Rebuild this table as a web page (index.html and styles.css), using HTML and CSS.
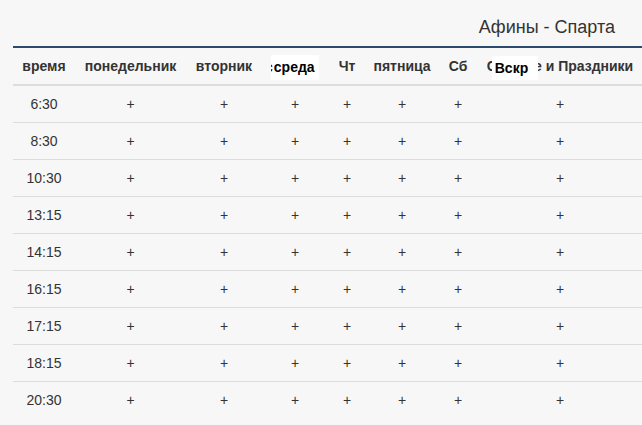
FILE: index.html
```html
<!DOCTYPE html>
<html lang="ru">
<head>
<meta charset="utf-8">
<title>Афины - Спарта</title>
<link rel="stylesheet" href="styles.css">
</head>
<body>
<div class="wrap">
  <div class="route-title">Афины - Спарта</div>
  <table class="schedule">
    <colgroup>
      <col class="c-time"><col class="c-mon"><col class="c-tue"><col class="c-wed">
      <col class="c-thu"><col class="c-fri"><col class="c-sat"><col class="c-sun">
    </colgroup>
    <thead>
      <tr>
        <th>время</th>
        <th>понедельник</th>
        <th>вторник</th>
        <th><span class="patch patch-wed">среда</span></th>
        <th>Чт</th>
        <th>пятница</th>
        <th>Сб</th>
        <th><span class="frag frag-c"></span><span class="patch patch-sun">Вскр</span><span class="frag frag-e"></span> и Праздники</th>
      </tr>
    </thead>
    <tbody>
      <tr><td>6:30</td><td>+</td><td>+</td><td>+</td><td>+</td><td>+</td><td>+</td><td>+</td></tr>
      <tr><td>8:30</td><td>+</td><td>+</td><td>+</td><td>+</td><td>+</td><td>+</td><td>+</td></tr>
      <tr><td>10:30</td><td>+</td><td>+</td><td>+</td><td>+</td><td>+</td><td>+</td><td>+</td></tr>
      <tr><td>13:15</td><td>+</td><td>+</td><td>+</td><td>+</td><td>+</td><td>+</td><td>+</td></tr>
      <tr><td>14:15</td><td>+</td><td>+</td><td>+</td><td>+</td><td>+</td><td>+</td><td>+</td></tr>
      <tr><td>16:15</td><td>+</td><td>+</td><td>+</td><td>+</td><td>+</td><td>+</td><td>+</td></tr>
      <tr><td>17:15</td><td>+</td><td>+</td><td>+</td><td>+</td><td>+</td><td>+</td><td>+</td></tr>
      <tr><td>18:15</td><td>+</td><td>+</td><td>+</td><td>+</td><td>+</td><td>+</td><td>+</td></tr>
      <tr><td>20:30</td><td>+</td><td>+</td><td>+</td><td>+</td><td>+</td><td>+</td><td>+</td></tr>
    </tbody>
  </table>
</div>
</body>
</html>
```
FILE: styles.css
```css
html, body {
  margin: 0;
  padding: 0;
  background: #f7f7f7;
}
body {
  font-family: "Liberation Sans", Arial, sans-serif;
  font-size: 14px;
  line-height: 20px;
  color: #333;
  overflow: hidden;
}
.wrap {
  padding-left: 13px;
}
.route-title {
  font-size: 18px;
  line-height: 20px;
  color: #333;
  text-align: right;
  padding: 17px 27px 9px 0;
  border-bottom: 2px solid #2b4a6c;
}
.schedule {
  width: 629px;
  table-layout: fixed;
  border-collapse: collapse;
  border-spacing: 0;
}
.c-time { width: 62px; }
.c-mon { width: 111px; }
.c-tue { width: 76px; }
.c-wed { width: 66px; }
.c-thu { width: 38px; }
.c-fri { width: 72px; }
.c-sat { width: 40px; }
.c-sun { width: 164px; }
.schedule th,
.schedule td {
  padding: 8px 0;
  text-align: center;
  white-space: nowrap;
  vertical-align: middle;
}
.schedule th {
  font-weight: bold;
  color: #333;
  border-bottom: 2px solid #dddddd;
}
.schedule td {
  border-top: 1px solid #dddddd;
  color: #333;
}
.schedule tbody tr:first-child td {
  border-top: 0;
}
.patch {
  display: inline-block;
  vertical-align: top;
  background: #ffffff;
  color: #000;
  font-weight: bold;
  text-align: left;
  line-height: 24px;
  overflow: hidden;
  white-space: nowrap;
  box-sizing: border-box;
}
.patch-wed {
  width: 48px;
  height: 25px;
  margin: -1px 0 -4px 0;
  padding-left: 3px;
}
.patch-wed::before {
  content: "с";
  display: inline-block;
  margin-left: -9px;
  margin-right: 1px;
}
.patch-sun {
  width: 46px;
  height: 24px;
  margin: 0 0 -4px 0;
  padding-left: 3px;
}
.frag {
  display: inline-block;
  vertical-align: top;
  overflow: hidden;
  white-space: nowrap;
}
.frag-c {
  width: 5px;
}
.frag-c::before {
  content: "С";
}
.frag-e {
  width: 4px;
  direction: rtl;
}
.frag-e::before {
  content: "е";
}
```
